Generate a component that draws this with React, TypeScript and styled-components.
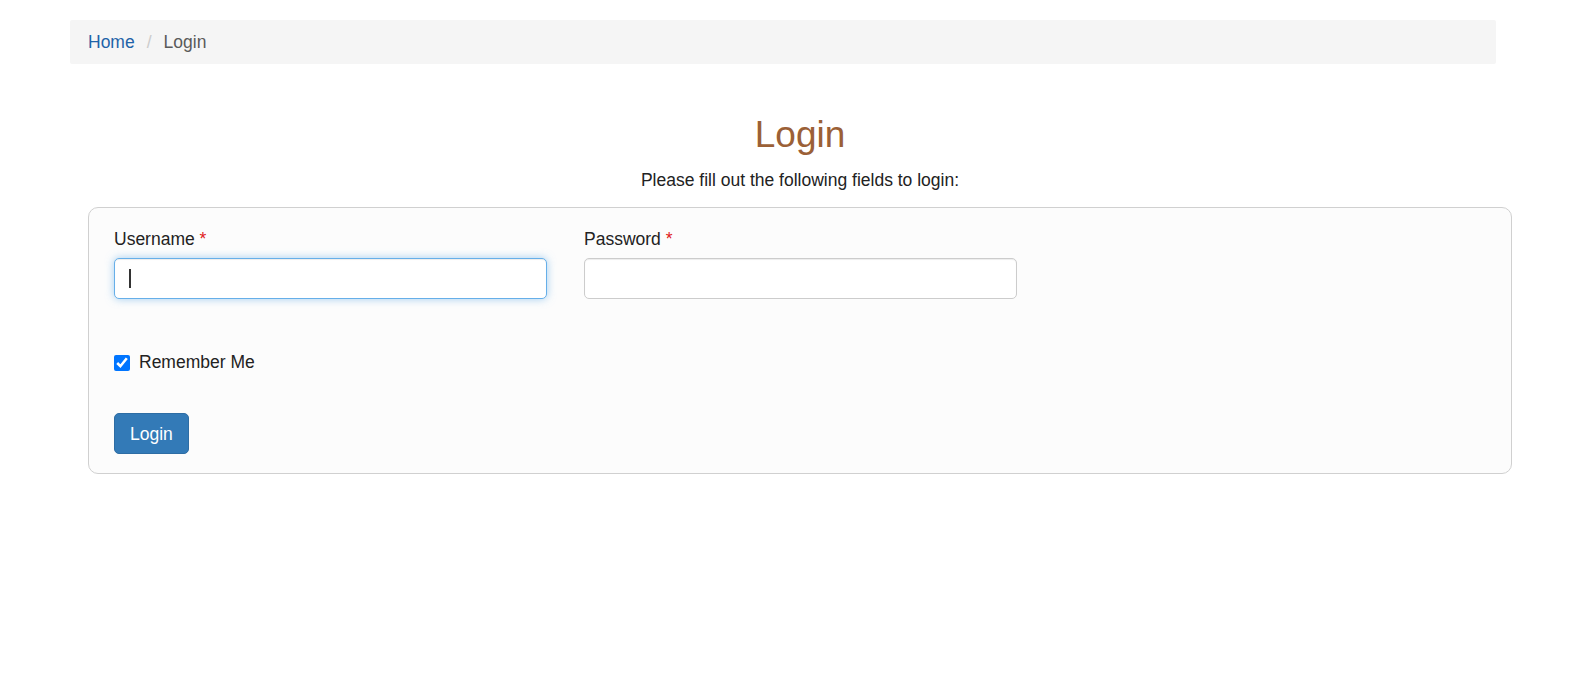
import React, { useState } from 'react';
import styled, { createGlobalStyle } from 'styled-components';

const GlobalStyle = createGlobalStyle`
  body {
    margin: 0;
    background: #fff;
    font-family: 'Liberation Sans', Arial, sans-serif;
    font-size: 17.5px;
    line-height: 24px;
    color: #222;
  }
  * {
    box-sizing: border-box;
  }
`;

const Page = styled.div`
  padding-top: 20px;
`;

const Breadcrumb = styled.ol`
  display: flex;
  align-items: center;
  list-style: none;
  margin: 0 0 0 70px;
  width: 1426px;
  padding: 10px 18px;
  background: #f5f5f5;
  border-radius: 2px;
`;

const Crumb = styled.li<{ $active?: boolean }>`
  color: ${(p) => (p.$active ? '#5a5a5a' : '#1f63a8')};
  cursor: ${(p) => (p.$active ? 'default' : 'pointer')};
`;

const Separator = styled.li`
  color: #ccc;
  margin: 0 12px 0 12px;
`;

const Main = styled.main`
  margin-left: 88px;
  width: 1424px;
  padding-top: 50px;
`;

const Title = styled.h1`
  margin: 0;
  text-align: center;
  font-size: 37px;
  font-weight: 400;
  line-height: 42px;
  color: #9b6036;
`;

const Lead = styled.p`
  margin: 12px 0 15px;
  text-align: center;
  color: #222;
`;

const Card = styled.form`
  background: #fcfcfc;
  border: 1px solid #d0d0d0;
  border-radius: 10px;
  padding: 19px 25px 19px;
`;

const FieldRow = styled.div`
  display: flex;
  gap: 37px;
`;

const Field = styled.div`
  width: 433px;
  display: flex;
  flex-direction: column;
`;

const Label = styled.label`
  margin-bottom: 7px;
  color: #222;
  &::after {
    content: ' *';
    color: #e02020;
  }
`;

const InputBox = styled.div`
  position: relative;
`;

const Input = styled.input<{ $focused?: boolean }>`
  display: block;
  width: 100%;
  height: 41px;
  padding: 0 14px;
  font: inherit;
  color: #555;
  background: #fff;
  border: 1px solid ${(p) => (p.$focused ? '#66afe9' : '#ccc')};
  border-radius: 5px;
  outline: none;
  box-shadow: ${(p) =>
    p.$focused
      ? 'inset 0 1px 1px rgba(0,0,0,.075), 0 0 8px rgba(102,175,233,.6)'
      : 'inset 0 1px 1px rgba(0,0,0,.075)'};
`;

const Caret = styled.span`
  position: absolute;
  left: 15px;
  top: 11px;
  width: 2px;
  height: 19px;
  background: #333;
`;

const CheckRow = styled.label`
  display: flex;
  align-items: center;
  gap: 9px;
  margin-top: 51px;
  cursor: pointer;
`;

const Check = styled.input`
  width: 16px;
  height: 16px;
  margin: 2px 0 0;
  accent-color: #0075ff;
`;

const SubmitButton = styled.button`
  display: block;
  margin-top: 39px;
  height: 41px;
  padding: 0 15px;
  font: inherit;
  color: #fff;
  background: #337ab7;
  border: 1px solid #2e6da4;
  border-radius: 5px;
  cursor: pointer;
`;

const App: React.FC = () => {
  const [username, setUsername] = useState('');
  const [password, setPassword] = useState('');
  const [remember, setRemember] = useState(true);

  return (
    <Page>
      <GlobalStyle />
      <Breadcrumb>
        <Crumb>Home</Crumb>
        <Separator>/</Separator>
        <Crumb $active>Login</Crumb>
      </Breadcrumb>
      <Main>
        <Title>Login</Title>
        <Lead>Please fill out the following fields to login:</Lead>
        <Card onSubmit={(e) => e.preventDefault()}>
          <FieldRow>
            <Field>
              <Label htmlFor='login-username'>Username</Label>
              <InputBox>
                <Input
                  id='login-username'
                  $focused
                  value={username}
                  onChange={(e) => setUsername(e.target.value)}
                />
                {username === '' && <Caret />}
              </InputBox>
            </Field>
            <Field>
              <Label htmlFor='login-password'>Password</Label>
              <Input
                id='login-password'
                type='password'
                value={password}
                onChange={(e) => setPassword(e.target.value)}
              />
            </Field>
          </FieldRow>
          <CheckRow>
            <Check
              type='checkbox'
              checked={remember}
              onChange={() => setRemember(!remember)}
            />
            Remember Me
          </CheckRow>
          <SubmitButton type='submit'>Login</SubmitButton>
        </Card>
      </Main>
    </Page>
  );
};

export default App;
